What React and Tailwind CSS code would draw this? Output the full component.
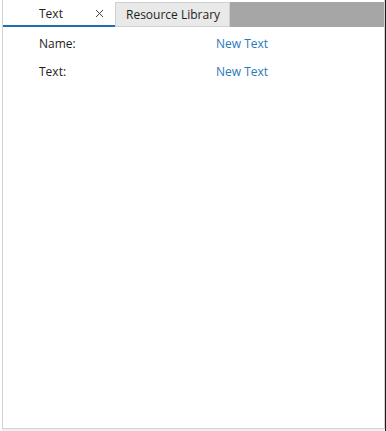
import { X } from "lucide-react";

export default function App() {
  return (
    <div className="w-[386px] h-[431px] bg-[#f0f0f0] flex" style={{ fontFamily: '"Open Sans", "Noto Sans", sans-serif' }}>
      <div className="w-[2px] h-full bg-white" />
      <div className="w-[383px] h-[429px] bg-white border-l border-r border-b border-[#d3d3d3] flex flex-col">
        <div className="h-[27px] flex items-end">
          <div className="w-[112px] h-[27px] border-b-2 border-[#1f6fb0] flex items-center pl-[36px] pr-[9px] text-[12px] text-[#1e1e1e]">
            <span className="pt-[3px]">Text</span>
            <X className="ml-auto mt-[2px]" size={13} strokeWidth={1.7} color="#333333" />
          </div>
          <div className="w-[115px] h-[25px] bg-[#e9e9e9] border border-[#d0d0d0] flex items-center pl-[10px] text-[12px] text-[#1e1e1e]">
            <span className="pt-[1px]">Resource Library</span>
          </div>
          <div className="flex-1 h-[25px] bg-[#a6a6a6]" />
        </div>
        <div className="flex flex-col pt-[3px] text-[12px]">
          <div className="h-[28px] flex items-center">
            <span className="w-[213px] pl-[36px] text-[#1e1e1e]">Name:</span>
            <span className="text-[#2b7ab8]">New Text</span>
          </div>
          <div className="h-[28px] flex items-center">
            <span className="w-[213px] pl-[36px] text-[#1e1e1e]">Text:</span>
            <span className="text-[#2b7ab8]">New Text</span>
          </div>
        </div>
      </div>
      <div className="w-[1px] h-full bg-[#1a1a1a]" />
    </div>
  );
}
